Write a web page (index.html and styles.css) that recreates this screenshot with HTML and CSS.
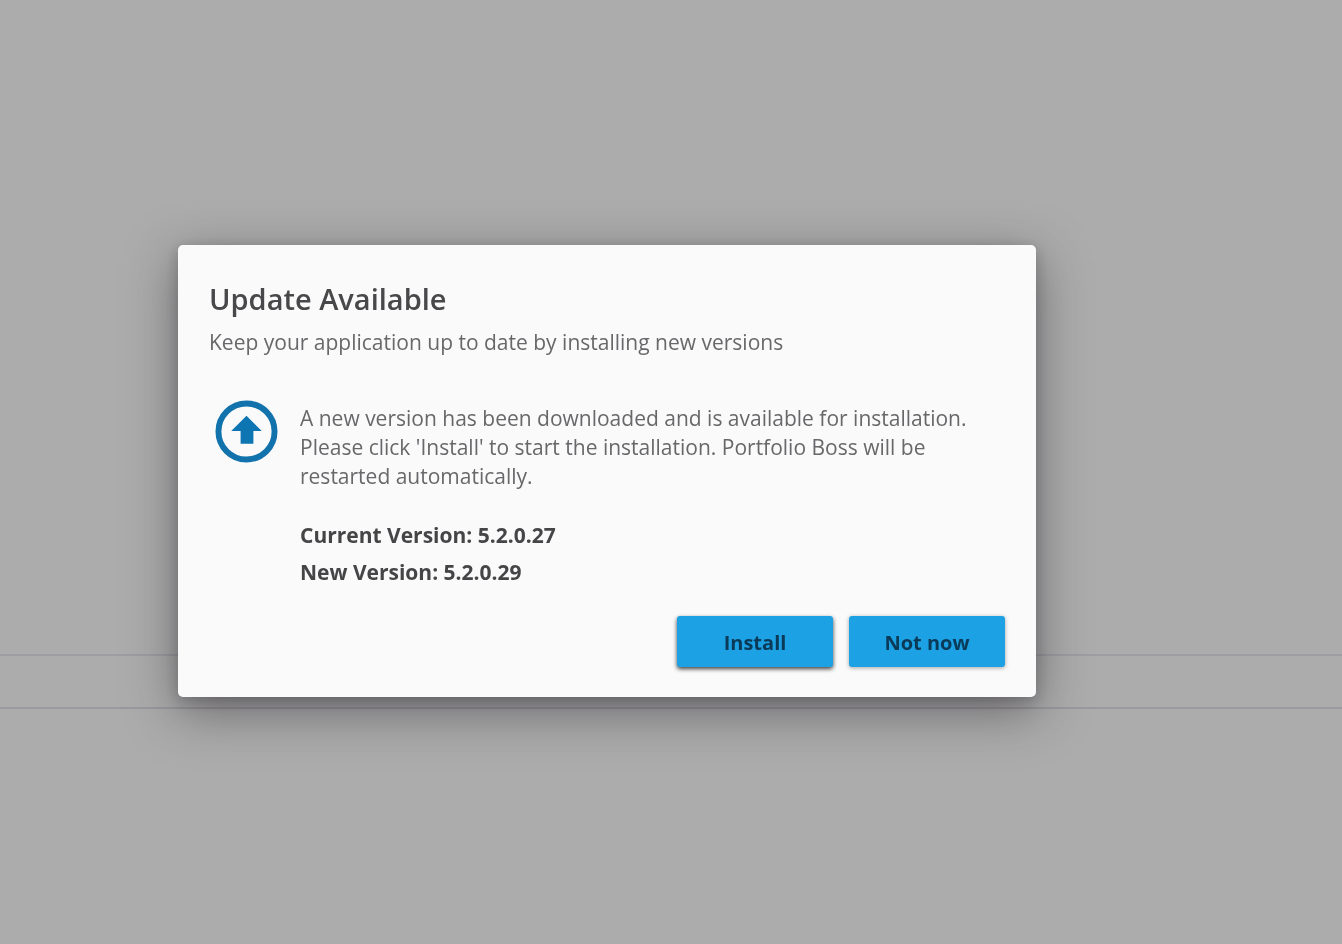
FILE: index.html
```html
<!doctype html>
<html lang="en">

<head>
    <meta charset="UTF-8">
    <meta name="viewport" content="width=device-width, initial-scale=1.0">
    <title>Update Available</title>
    <link rel="stylesheet" href="styles.css">
</head>

<body>
    <div class="page">
        <div class="page-content"></div>
        <div class="page-bar"></div>
        <div class="page-footer"></div>
    </div>
    <div class="overlay">
        <div class="dialog" role="dialog" aria-modal="true" aria-labelledby="title">
            <h1 id="title">Update Available</h1>
            <p class="subtitle">Keep your application up to date by installing new versions</p>
            <div class="content">
                <svg class="icon" viewBox="0 0 64 64" aria-hidden="true">
                    <circle cx="32" cy="32" r="28.5" fill="none" stroke="#1272ab" stroke-width="6" />
                    <path d="M32 16 L47.5 31.5 H39 V44.5 H26 V31.5 H16.5 Z" fill="#0e75b3" />
                </svg>
                <div class="text">
                    <p class="message">A new version has been downloaded and is available for installation. Please click 'Install' to start the installation. Portfolio Boss will be restarted automatically.</p>
                    <p class="version">Current Version: 5.2.0.27</p>
                    <p class="version">New Version: 5.2.0.29</p>
                </div>
            </div>
            <div class="buttons">
                <button class="button focused" type="button">Install</button>
                <button class="button" type="button">Not now</button>
            </div>
        </div>
    </div>
</body>

</html>
```
FILE: styles.css
```css
* {
    margin: 0;
    padding: 0;
    box-sizing: border-box;
}

body {
    background-color: #acacac;
    color: #68686a;
    font-family: "Segoe UI", "Open Sans", "Noto Sans", sans-serif;
    font-size: 21px;
    line-height: 29px;
}

.page {
    display: flex;
    flex-direction: column;
    height: 100vh;
}

.page-content {
    flex: 654;
}

.page-bar {
    flex: 51;
    border-top: 2px solid #9f9da1;
    border-bottom: 2px solid #9b999d;
}

.page-footer {
    flex: 235;
}

.overlay {
    position: fixed;
    inset: 0;
    display: grid;
    grid-template-columns: 178fr 858fr 306fr;
    grid-template-rows: 26vh auto;
    align-content: start;
}

.dialog {
    grid-column: 2;
    grid-row: 2;
    padding: 36px 31px 30px;
    background-color: #fafafb;
    border-radius: 5px;
    box-shadow: 0 14px 50px rgba(40, 36, 42, 0.5), 0 4px 14px rgba(40, 36, 42, 0.25);
}

h1 {
    color: #48484a;
    font-size: 29px;
    font-weight: 600;
    line-height: 36px;
}

.subtitle {
    margin-top: 11px;
}

.content {
    display: flex;
    gap: 22px;
    margin: 47px 0 25px;
    padding-left: 6px;
}

.icon {
    flex: none;
    width: 63px;
    height: 63px;
    margin-top: -4px;
}

.message {
    max-width: 680px;
    margin-bottom: 26px;
}

.version {
    color: #454547;
    font-weight: 700;
    line-height: 37px;
}

.buttons {
    display: flex;
    justify-content: flex-end;
    gap: 16px;
}

.button {
    width: 156px;
    height: 51px;
    padding-top: 2px;
    border: none;
    border-radius: 3px;
    background-color: #1ba1e4;
    box-shadow: 0 1px 4px rgba(0, 0, 0, 0.35);
    color: #0b3a58;
    font-family: inherit;
    font-size: 20px;
    font-weight: 700;
}

.focused {
    box-shadow: 0 2px 4px rgba(0, 0, 0, 0.75);
}
```
